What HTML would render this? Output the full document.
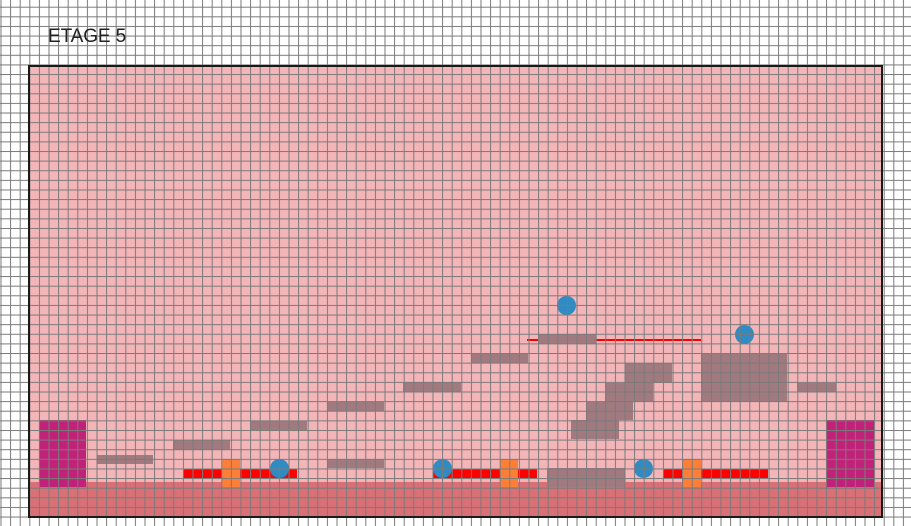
<!DOCTYPE html>
<html><head><meta charset="utf-8"><style>
html,body{margin:0;padding:0;background:#fff;}
body{width:911px;height:526px;position:relative;overflow:hidden;font-family:"Liberation Sans",sans-serif;}
.a{position:absolute;}
.p{position:absolute;background:#a07a7e;}
.r{position:absolute;background:#ff0000;}
.o{position:absolute;background:#fd7f37;}
.b{position:absolute;background:#2e8bc4;border-radius:50%;width:19px;height:19px;}
.m{position:absolute;background:#c2217a;}
</style></head><body>
<div class="a" style="left:29px;top:66px;width:852px;height:450px;background:#f4b5b8;"></div>
<div class="a" style="left:29px;top:482px;width:852px;height:34px;background:#d97075;"></div>

<div class="m" style="left:39px;top:420px;width:47px;height:67px;"></div>
<div class="m" style="left:826px;top:420px;width:48px;height:67px;"></div>

<div class="p" style="left:97px;top:455px;width:56px;height:9px;"></div>
<div class="p" style="left:173px;top:440px;width:57px;height:10px;"></div>
<div class="p" style="left:250px;top:421px;width:57px;height:9px;"></div>
<div class="p" style="left:327px;top:402px;width:57px;height:9px;"></div>
<div class="p" style="left:327px;top:459px;width:57px;height:9px;"></div>
<div class="p" style="left:403px;top:382px;width:58px;height:10px;"></div>
<div class="p" style="left:471px;top:354px;width:57px;height:9px;"></div>
<div class="p" style="left:538px;top:334px;width:58px;height:10px;"></div>
<div class="p" style="left:547px;top:468px;width:78px;height:19px;"></div>
<div class="p" style="left:625px;top:363px;width:47px;height:20px;"></div>
<div class="p" style="left:605px;top:383px;width:48px;height:19px;"></div>
<div class="p" style="left:586px;top:402px;width:47px;height:18px;"></div>
<div class="p" style="left:571px;top:420px;width:48px;height:19px;"></div>
<div class="p" style="left:701px;top:354px;width:86px;height:48px;"></div>
<div class="p" style="left:797px;top:383px;width:39px;height:9px;"></div>

<div class="r" style="left:527px;top:339px;width:11px;height:2px;"></div>
<div class="r" style="left:596px;top:339px;width:105px;height:2px;"></div>

<div class="r" style="left:183px;top:469px;width:114px;height:9px;"></div>
<div class="r" style="left:433px;top:469px;width:104px;height:9px;"></div>
<div class="r" style="left:663px;top:469px;width:105px;height:9px;"></div>
<div class="o" style="left:222px;top:459px;width:18px;height:28px;"></div>
<div class="o" style="left:500px;top:459px;width:18px;height:28px;"></div>
<div class="o" style="left:682px;top:459px;width:19px;height:28px;"></div>

<div class="b" style="left:270px;top:459px;"></div>
<div class="b" style="left:433px;top:459px;"></div>
<div class="b" style="left:634px;top:459px;"></div>
<div class="b" style="left:557px;top:296px;"></div>
<div class="b" style="left:735px;top:325px;"></div>

<svg class="a" style="left:0;top:0" width="911" height="526">
<defs><pattern id="g" patternUnits="userSpaceOnUse" x="0.5" y="6.7" width="9.6" height="9.62">
<rect x="0" y="0" width="1" height="9.62" fill="#7a7a7a"/>
<rect x="0" y="0" width="9.6" height="1" fill="#7a7a7a"/>
</pattern></defs>
<rect width="911" height="526" fill="url(#g)"/>
</svg>

<div class="a" style="left:28px;top:65px;width:851px;height:449px;border:2px solid #1a1a1a;"></div>
<div class="a" style="left:48px;top:26px;font-size:19px;letter-spacing:-0.1px;color:#222;line-height:22px;">ETAGE 5</div>
</body></html>
